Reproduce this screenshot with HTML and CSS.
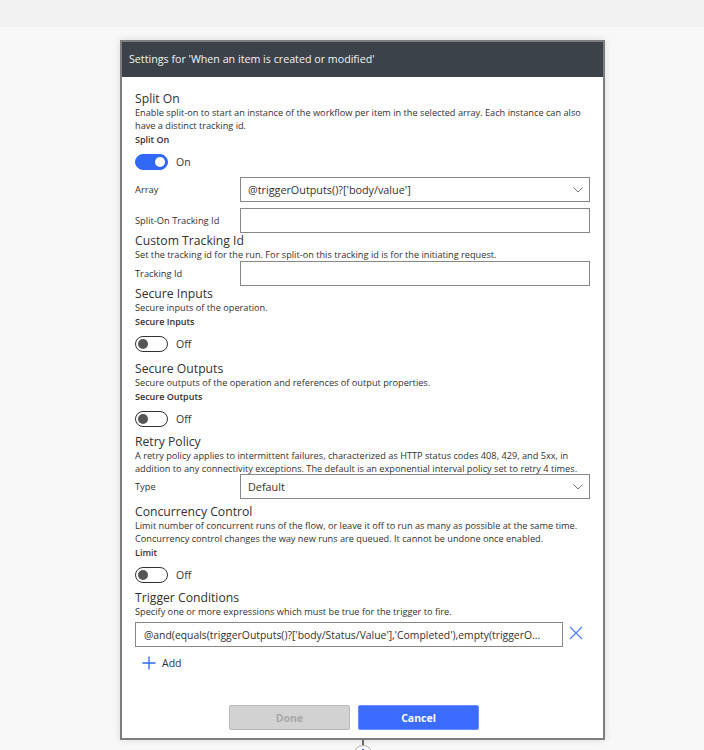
FILE: index.html
```html
<!DOCTYPE html>
<html lang="en">
<head>
<meta charset="utf-8">
<title>Settings</title>
<link rel="stylesheet" href="styles.css">
</head>
<body>
<div class="topbar"></div>
<div class="canvas">
  <div class="flow">
    <div class="dialog">
      <div class="dlg-header">Settings for 'When an item is created or modified'</div>
      <div class="dlg-body">

        <section class="sec">
          <h2 class="sec-title">Split On</h2>
          <p class="sec-desc">Enable split-on to start an instance of the workflow per item in the selected array. Each instance can also<br>have a distinct tracking id.</p>
          <div class="field-label">Split On</div>
          <div class="toggle-row">
            <span class="toggle on"><span class="knob"></span></span>
            <span class="toggle-text">On</span>
          </div>
          <div class="row row-first">
            <label class="row-label">Array</label>
            <div class="box">
              <span class="box-text">@triggerOutputs()?['body/value']</span>
              <svg class="chevron" width="10" height="6" viewBox="0 0 10 6"><polyline points="0.5,0.5 5,5 9.5,0.5" fill="none" stroke="#777" stroke-width="1"/></svg>
            </div>
          </div>
          <div class="row row-next">
            <label class="row-label">Split-On Tracking Id</label>
            <div class="box"></div>
          </div>
        </section>

        <section class="sec sec-custom">
          <h2 class="sec-title">Custom Tracking Id</h2>
          <p class="sec-desc">Set the tracking id for the run. For split-on this tracking id is for the initiating request.</p>
          <div class="row">
            <label class="row-label">Tracking Id</label>
            <div class="box"></div>
          </div>
        </section>

        <section class="sec sec-inputs">
          <h2 class="sec-title">Secure Inputs</h2>
          <p class="sec-desc">Secure inputs of the operation.</p>
          <div class="field-label">Secure Inputs</div>
          <div class="toggle-row">
            <span class="toggle"><span class="knob"></span></span>
            <span class="toggle-text">Off</span>
          </div>
        </section>

        <section class="sec sec-outputs">
          <h2 class="sec-title">Secure Outputs</h2>
          <p class="sec-desc">Secure outputs of the operation and references of output properties.</p>
          <div class="field-label">Secure Outputs</div>
          <div class="toggle-row">
            <span class="toggle"><span class="knob"></span></span>
            <span class="toggle-text">Off</span>
          </div>
        </section>

        <section class="sec sec-retry">
          <h2 class="sec-title">Retry Policy</h2>
          <p class="sec-desc">A retry policy applies to intermittent failures, characterized as HTTP status codes 408, 429, and 5xx, in<br>addition to any connectivity exceptions. The default is an exponential interval policy set to retry 4 times.</p>
          <div class="row row-tight">
            <label class="row-label">Type</label>
            <div class="box">
              <span class="box-text">Default</span>
              <svg class="chevron" width="10" height="6" viewBox="0 0 10 6"><polyline points="0.5,0.5 5,5 9.5,0.5" fill="none" stroke="#777" stroke-width="1"/></svg>
            </div>
          </div>
        </section>

        <section class="sec sec-concurrency">
          <h2 class="sec-title">Concurrency Control</h2>
          <p class="sec-desc">Limit number of concurrent runs of the flow, or leave it off to run as many as possible at the same time.<br>Concurrency control changes the way new runs are queued. It cannot be undone once enabled.</p>
          <div class="field-label">Limit</div>
          <div class="toggle-row">
            <span class="toggle"><span class="knob"></span></span>
            <span class="toggle-text">Off</span>
          </div>
        </section>

        <section class="sec sec-trigger">
          <h2 class="sec-title">Trigger Conditions</h2>
          <p class="sec-desc">Specify one or more expressions which must be true for the trigger to fire.</p>
          <div class="cond-row">
            <div class="box cond-box"><span class="box-text cond-text">@and(equals(triggerOutputs()?['body/Status/Value'],'Completed'),empty(triggerO...</span></div>
            <svg class="cond-remove" width="14" height="14" viewBox="0 0 14 14"><path d="M1 1L13 13M13 1L1 13" stroke="#4f7dff" stroke-width="1.2" fill="none"/></svg>
          </div>
          <div class="add-row">
            <svg width="14" height="14" viewBox="0 0 14 14"><path d="M7 0.5V13.5M0.5 7H13.5" stroke="#2d66f6" stroke-width="1.3" fill="none"/></svg>
            <span class="add-text">Add</span>
          </div>
        </section>

        <div class="footer">
          <button class="btn btn-done" disabled>Done</button>
          <button class="btn btn-cancel">Cancel</button>
        </div>
      </div>
    </div>
    <div class="connector-line"></div>
    <div class="connector-dot"><span class="dot-mark"></span></div>
  </div>
</div>
</body>
</html>
```

FILE: styles.css
```css
* { box-sizing: border-box; }
html, body { margin: 0; padding: 0; }
body {
  background: #f8f8f8;
  font-family: "Open Sans", "Segoe UI", sans-serif;
  color: #323130;
  overflow: hidden;
}
.topbar { height: 27px; background: #f2f2f2; }
.canvas { padding: 13px 0 0 120px; }
.flow {
  width: 485px;
  display: flex;
  flex-direction: column;
  align-items: center;
}
.dialog {
  width: 485px;
  background: #fff;
  border: 2px solid #7d7d7d;
  box-shadow: 0 0 8px rgba(0, 0, 0, 0.12);
}
.dlg-header {
  height: 35px;
  line-height: 35px;
  background: #3c4249;
  color: #f2f2f2;
  font-size: 10.7px;
  padding-left: 7px;
  white-space: nowrap;
}
.dlg-body { padding: 15px 13px 8px 13px; }

.sec-title {
  margin: 0;
  font-size: 12.2px;
  font-weight: 400;
  line-height: 14px;
  color: #323130;
}
.sec-desc {
  margin: 0;
  font-size: 9.2px;
  line-height: 13px;
  white-space: nowrap;
  color: #323130;
}
.field-label {
  font-size: 9px;
  font-weight: 600;
  line-height: 15px;
}
.sec-custom { margin-top: 1px; }
.sec-inputs { margin-top: 1px; }
.sec-outputs { margin-top: 10px; }
.sec-retry { margin-top: 8px; }
.sec-concurrency { margin-top: 6px; }
.sec-trigger { margin-top: 8px; }

.toggle-row {
  margin-top: 7px;
  height: 16px;
  display: flex;
  align-items: center;
  gap: 8px;
}
.toggle {
  width: 33px;
  height: 16px;
  border-radius: 8px;
  border: 1px solid #323130;
  background: #fff;
  display: flex;
  align-items: center;
  padding: 0 2px;
}
.toggle .knob {
  width: 10px;
  height: 10px;
  border-radius: 50%;
  background: #555;
}
.toggle.on {
  background: #3268f6;
  border-color: #3268f6;
  justify-content: flex-end;
}
.toggle.on .knob { background: #fff; }
.toggle-text { font-size: 10.5px; line-height: 16px; }

.row { display: flex; height: 25px; }
.row-first { margin-top: 7px; }
.row-next { margin-top: 6px; }
.row-tight { margin-top: -1px; }
.row-label {
  width: 105px;
  flex: none;
  padding-top: 5px;
  font-size: 9.3px;
  line-height: 15px;
}
.box {
  flex: 1;
  height: 25px;
  border: 1px solid #8a8886;
  display: flex;
  align-items: center;
  padding: 0 6px 0 7px;
  min-width: 0;
}
.box-text {
  flex: 1;
  font-size: 10.8px;
  white-space: nowrap;
  overflow: hidden;
}
.cond-text { font-size: 10.4px; }
.chevron { flex: none; }

.cond-row {
  margin-top: 4px;
  display: flex;
  align-items: center;
  gap: 6px;
}
.cond-box { flex: none; width: 428px; padding-left: 8px; padding-right: 4px; }
.cond-remove { flex: none; margin-top: -4px; }

.add-row {
  margin-top: 8px;
  height: 16px;
  display: flex;
  align-items: center;
  gap: 6px;
  padding-left: 7px;
}
.add-text { font-size: 10.5px; }

.footer {
  margin-top: 34px;
  display: flex;
  gap: 8px;
  padding-left: 94px;
}
.btn {
  width: 121px;
  height: 25px;
  border-radius: 2px;
  font-family: inherit;
  font-size: 10.5px;
  font-weight: 700;
  padding: 0;
}
.btn-done {
  background: #d2d2d2;
  border: 1px solid #b8b8b8;
  color: #a8a8a8;
}
.btn-cancel {
  background: #3b6bff;
  border: 1px solid #6a8eff;
  color: #fff;
}

.connector-line { width: 2px; height: 5px; background: #666; }
.connector-dot {
  width: 20px;
  height: 20px;
  border-radius: 50%;
  border: 1px solid #aaa;
  background: #fff;
  display: flex;
  justify-content: center;
  padding-top: 3px;
}
.dot-mark { width: 2px; height: 6px; background: #3b6bff; }
```
